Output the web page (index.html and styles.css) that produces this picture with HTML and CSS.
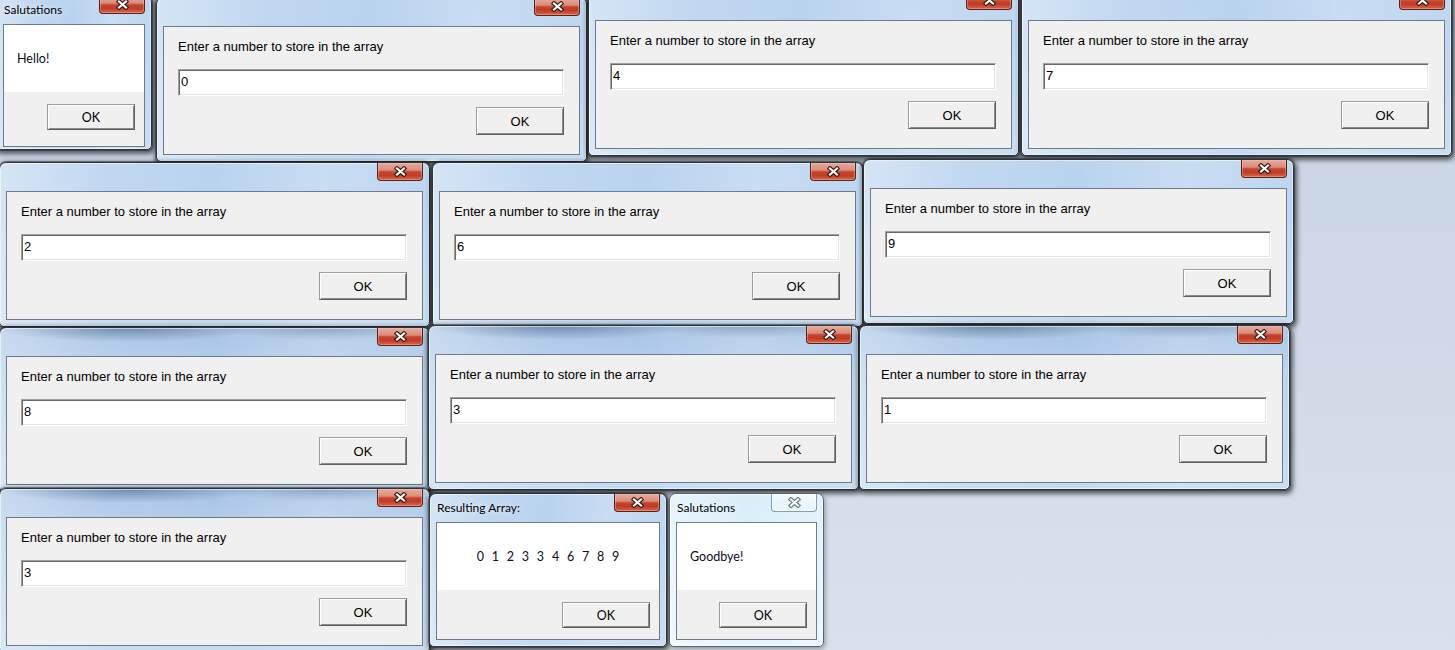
FILE: index.html
```html
<!DOCTYPE html>
<html lang="en">
<head>
<meta charset="utf-8">
<title>Array dialogs</title>
<link rel="stylesheet" href="styles.css">
</head>
<body>
<main class="desktop">

  <section class="win msgwin w-hello">
    <header class="titlebar"><span class="title">Salutations</span>
      <span class="close"><svg class="x" width="13" height="11" viewBox="0 0 13 11"><path class="x-out" d="M3 2.5 L10 8.5 M10 2.5 L3 8.5"/><path class="x-in" d="M3 2.5 L10 8.5 M10 2.5 L3 8.5"/></svg></span>
    </header>
    <div class="client msg">
      <div class="msg-body"><p class="msg-text">Hello!</p></div>
      <div class="msg-foot"><button class="btn msg-btn">OK</button></div>
    </div>
  </section>

  <section class="win inwin w-r1a">
    <header class="titlebar"><span class="close"><svg class="x" width="13" height="11" viewBox="0 0 13 11"><path class="x-out" d="M3 2.5 L10 8.5 M10 2.5 L3 8.5"/><path class="x-in" d="M3 2.5 L10 8.5 M10 2.5 L3 8.5"/></svg></span></header>
    <div class="client prompt">
      <p class="prompt-text">Enter a number to store in the array</p>
      <input class="field" value="0" readonly>
      <button class="btn prompt-btn">OK</button>
    </div>
  </section>

  <section class="win inwin w-r1b">
    <header class="titlebar"><span class="close"><svg class="x" width="13" height="11" viewBox="0 0 13 11"><path class="x-out" d="M3 2.5 L10 8.5 M10 2.5 L3 8.5"/><path class="x-in" d="M3 2.5 L10 8.5 M10 2.5 L3 8.5"/></svg></span></header>
    <div class="client prompt">
      <p class="prompt-text">Enter a number to store in the array</p>
      <input class="field" value="4" readonly>
      <button class="btn prompt-btn">OK</button>
    </div>
  </section>

  <section class="win inwin w-r1c">
    <header class="titlebar"><span class="close"><svg class="x" width="13" height="11" viewBox="0 0 13 11"><path class="x-out" d="M3 2.5 L10 8.5 M10 2.5 L3 8.5"/><path class="x-in" d="M3 2.5 L10 8.5 M10 2.5 L3 8.5"/></svg></span></header>
    <div class="client prompt">
      <p class="prompt-text">Enter a number to store in the array</p>
      <input class="field" value="7" readonly>
      <button class="btn prompt-btn">OK</button>
    </div>
  </section>

  <section class="win inwin w-r2a">
    <header class="titlebar"><span class="close"><svg class="x" width="13" height="11" viewBox="0 0 13 11"><path class="x-out" d="M3 2.5 L10 8.5 M10 2.5 L3 8.5"/><path class="x-in" d="M3 2.5 L10 8.5 M10 2.5 L3 8.5"/></svg></span></header>
    <div class="client prompt">
      <p class="prompt-text">Enter a number to store in the array</p>
      <input class="field" value="2" readonly>
      <button class="btn prompt-btn">OK</button>
    </div>
  </section>

  <section class="win inwin w-r2b">
    <header class="titlebar"><span class="close"><svg class="x" width="13" height="11" viewBox="0 0 13 11"><path class="x-out" d="M3 2.5 L10 8.5 M10 2.5 L3 8.5"/><path class="x-in" d="M3 2.5 L10 8.5 M10 2.5 L3 8.5"/></svg></span></header>
    <div class="client prompt">
      <p class="prompt-text">Enter a number to store in the array</p>
      <input class="field" value="6" readonly>
      <button class="btn prompt-btn">OK</button>
    </div>
  </section>

  <section class="win inwin w-r2c">
    <header class="titlebar"><span class="close"><svg class="x" width="13" height="11" viewBox="0 0 13 11"><path class="x-out" d="M3 2.5 L10 8.5 M10 2.5 L3 8.5"/><path class="x-in" d="M3 2.5 L10 8.5 M10 2.5 L3 8.5"/></svg></span></header>
    <div class="client prompt">
      <p class="prompt-text">Enter a number to store in the array</p>
      <input class="field" value="9" readonly>
      <button class="btn prompt-btn">OK</button>
    </div>
  </section>

  <section class="win inwin dim w-r3a">
    <header class="titlebar"><span class="close"><svg class="x" width="13" height="11" viewBox="0 0 13 11"><path class="x-out" d="M3 2.5 L10 8.5 M10 2.5 L3 8.5"/><path class="x-in" d="M3 2.5 L10 8.5 M10 2.5 L3 8.5"/></svg></span></header>
    <div class="client prompt">
      <p class="prompt-text">Enter a number to store in the array</p>
      <input class="field" value="8" readonly>
      <button class="btn prompt-btn">OK</button>
    </div>
  </section>

  <section class="win inwin dim w-r3b">
    <header class="titlebar"><span class="close"><svg class="x" width="13" height="11" viewBox="0 0 13 11"><path class="x-out" d="M3 2.5 L10 8.5 M10 2.5 L3 8.5"/><path class="x-in" d="M3 2.5 L10 8.5 M10 2.5 L3 8.5"/></svg></span></header>
    <div class="client prompt">
      <p class="prompt-text">Enter a number to store in the array</p>
      <input class="field" value="3" readonly>
      <button class="btn prompt-btn">OK</button>
    </div>
  </section>

  <section class="win inwin dim w-r3c">
    <header class="titlebar"><span class="close"><svg class="x" width="13" height="11" viewBox="0 0 13 11"><path class="x-out" d="M3 2.5 L10 8.5 M10 2.5 L3 8.5"/><path class="x-in" d="M3 2.5 L10 8.5 M10 2.5 L3 8.5"/></svg></span></header>
    <div class="client prompt">
      <p class="prompt-text">Enter a number to store in the array</p>
      <input class="field" value="1" readonly>
      <button class="btn prompt-btn">OK</button>
    </div>
  </section>

  <section class="win inwin dim w-r4a">
    <header class="titlebar"><span class="close"><svg class="x" width="13" height="11" viewBox="0 0 13 11"><path class="x-out" d="M3 2.5 L10 8.5 M10 2.5 L3 8.5"/><path class="x-in" d="M3 2.5 L10 8.5 M10 2.5 L3 8.5"/></svg></span></header>
    <div class="client prompt">
      <p class="prompt-text">Enter a number to store in the array</p>
      <input class="field" value="3" readonly>
      <button class="btn prompt-btn">OK</button>
    </div>
  </section>

  <section class="win msgwin w-res">
    <header class="titlebar"><span class="title">Resulting Array:</span>
      <span class="close"><svg class="x" width="13" height="11" viewBox="0 0 13 11"><path class="x-out" d="M3 2.5 L10 8.5 M10 2.5 L3 8.5"/><path class="x-in" d="M3 2.5 L10 8.5 M10 2.5 L3 8.5"/></svg></span>
    </header>
    <div class="client msg">
      <div class="msg-body"><p class="msg-text digits">0 1 2 3 3 4 6 7 8 9</p></div>
      <div class="msg-foot"><button class="btn msg-btn">OK</button></div>
    </div>
  </section>

  <section class="win msgwin inactive w-bye">
    <header class="titlebar"><span class="title">Salutations</span>
      <span class="close"><svg class="x" width="13" height="11" viewBox="0 0 13 11"><path class="x-out" d="M3 2.5 L10 8.5 M10 2.5 L3 8.5"/><path class="x-in" d="M3 2.5 L10 8.5 M10 2.5 L3 8.5"/></svg></span>
    </header>
    <div class="client msg">
      <div class="msg-body"><p class="msg-text">Goodbye!</p></div>
      <div class="msg-foot"><button class="btn msg-btn">OK</button></div>
    </div>
  </section>

</main>
</body>
</html>
```

FILE: styles.css
```css
* { box-sizing: border-box; }

html, body {
  margin: 0;
  padding: 0;
}

body {
  width: 1455px;
  height: 650px;
  overflow: hidden;
  font-family: "Liberation Sans", Arial, sans-serif;
  color: #000;
}

.desktop {
  position: relative;
  width: 1455px;
  height: 650px;
  overflow: hidden;
  background: linear-gradient(180deg, #c6d3e4 0%, #cfd9e7 45%, #d8e1ec 100%);
}

/* ---------- window frame ---------- */
.win {
  position: absolute;
  display: flex;
  flex-direction: column;
  padding: 0 6px 6px;
  border: 1px solid #2c343d;
  border-radius: 7px 7px 5px 5px;
  background:
    linear-gradient(90deg, rgba(255,255,255,0.40) 0%, rgba(255,255,255,0.10) 25%, rgba(255,255,255,0) 50%, rgba(255,255,255,0.22) 75%, rgba(255,255,255,0.08) 100%),
    linear-gradient(180deg, #bad3ee 0%, #b8d3f1 30%, #c4dbf2 100%);
  box-shadow:
    inset 0 0 0 1px rgba(255,255,255,0.55),
    0 0 0 1px rgba(30,35,40,0.45),
    1px 2px 5px 2px rgba(0,0,0,0.6);
}

.win.dim {
  background:
    radial-gradient(ellipse 30% 14px at 30% 0, rgba(60,90,130,0.55), rgba(60,90,130,0)),
    radial-gradient(ellipse 25% 12px at 75% 0, rgba(60,90,130,0.35), rgba(60,90,130,0)),
    linear-gradient(90deg, rgba(255,255,255,0.35) 0%, rgba(255,255,255,0.08) 25%, rgba(255,255,255,0) 50%, rgba(255,255,255,0.20) 75%, rgba(255,255,255,0.08) 100%),
    linear-gradient(180deg, #a9c4e4 0%, #b8d2ef 35%, #c4dbf2 100%);
}

.win.inactive {
  border-color: #56636f;
  background:
    linear-gradient(90deg, rgba(255,255,255,0.45) 0%, rgba(255,255,255,0.1) 50%, rgba(255,255,255,0.3) 100%),
    linear-gradient(180deg, #d4ebf8 0%, #d9f0fb 40%, #e1f3fb 100%);
  box-shadow:
    inset 0 0 0 1px rgba(255,255,255,0.7),
    1px 2px 5px 0 rgba(0,0,0,0.35);
}

.titlebar {
  position: relative;
  height: 28px;
  display: flex;
  align-items: center;
  flex: none;
}

.title {
  font-family: Lato, "Noto Sans", sans-serif;
  font-size: 12px;
  color: #000;
  padding-left: 1px;
  margin-top: -1px;
  text-shadow: 0 0 6px rgba(255,255,255,0.9);
}

/* ---------- close button ---------- */
.close {
  position: absolute;
  top: 0;
  right: 0;
  width: 46px;
  height: 18px;
  display: flex;
  align-items: center;
  justify-content: center;
  border: 1px solid #5a2218;
  border-top: none;
  border-radius: 0 0 4px 4px;
  background: linear-gradient(180deg, #e7ab9d 0%, #d98c7b 42%, #c4462f 52%, #c03b25 72%, #d7674d 100%);
  box-shadow: inset 0 0 0 1px rgba(255,210,200,0.35);
}

.x { display: block; }
.x-out { stroke: #3a1711; stroke-width: 4.4; fill: none; stroke-linecap: square; }
.x-in  { stroke: #ffffff; stroke-width: 2.2; fill: none; stroke-linecap: square; }

.inactive .close {
  border-color: #8b99a8;
  background: linear-gradient(180deg, rgba(255,255,255,0.75) 0%, rgba(255,255,255,0.35) 50%, rgba(235,247,252,0.6) 100%);
  box-shadow: inset 0 0 0 1px rgba(255,255,255,0.6);
}
.inactive .x-out { stroke: #6d7886; }
.inactive .x-in  { stroke: #f4f7fa; }

/* ---------- client area ---------- */
.client {
  border: 1px solid #6c7a89;
  background: #f0f0f0;
  flex: none;
}

/* input prompt windows */
.inwin { width: 431px; }

.prompt {
  height: 129px;
  display: flex;
  flex-direction: column;
  padding: 12px 15px 0 14px;
}

.prompt-text {
  margin: 0;
  font-size: 13px;
  line-height: 16px;
  height: 16px;
}

.field {
  display: block;
  margin-top: 14px;
  width: 386px;
  height: 27px;
  padding: 0 0 2px 2px;
  font-family: "Liberation Sans", Arial, sans-serif;
  font-size: 13px;
  color: #000;
  background: #fff;
  border: 1px solid;
  border-color: #a0a0a0 #ffffff #ffffff #a0a0a0;
  box-shadow: inset 1px 1px 0 #696969, inset -1px -1px 0 #e3e3e3;
  outline: none;
}

.btn {
  display: block;
  width: 88px;
  height: 28px;
  padding: 0;
  background: #f0f0f0;
  color: #000;
  border: 1px solid;
  border-color: #9d9d9d #5e5e5e #5e5e5e #9d9d9d;
  box-shadow: inset 1px 1px 0 #ffffff, inset -1px -1px 0 #8a8a8a;
  border-radius: 0;
  cursor: default;
}

.prompt-btn {
  margin-top: 11px;
  align-self: flex-end;
  font-family: "Liberation Sans", Arial, sans-serif;
  font-size: 13px;
}

/* message boxes */
.msg {
  display: flex;
  flex-direction: column;
}

.msg-body {
  height: 67px;
  background: #fff;
  padding: 26px 0 0 13px;
  flex: none;
}

.msg-text {
  margin: 0;
  font-family: Lato, "Noto Sans", sans-serif;
  font-size: 12.5px;
  line-height: 16px;
  color: #0c0c1c;
}

.digits {
  text-align: center;
  word-spacing: 4.6px;
}

.msg-foot {
  flex: 1;
  display: flex;
  justify-content: flex-end;
  align-items: flex-start;
  padding: 12px 9px 0 0;
}

.msg-btn {
  height: 26px;
  font-family: Lato, "Noto Sans", sans-serif;
  font-size: 12.5px;
}

/* ---------- window placement on the desktop ---------- */
.w-hello { left: -4px; top: -5px; width: 156px; padding-bottom: 2px; }
.w-hello .client { height: 123px; }

.w-r1a { left: 156px;  top: -3px; }
.w-r1b { left: 588px;  top: -9px; }
.w-r1c { left: 1021px; top: -9px; }

.w-r2a { left: -1px;  top: 162px; }
.w-r2b { left: 432px; top: 162px; }
.w-r2c { left: 863px; top: 159px; }

.w-r3a { left: -1px;  top: 327px; }
.w-r3b { left: 428px; top: 325px; }
.w-r3c { left: 859px; top: 325px; }

.w-r4a { left: -1px; top: 488px; }

.w-res { left: 429px; top: 493px; width: 238px; }
.w-res .client { height: 118px; }
.w-res .msg-body { padding-left: 0; }

.w-bye { left: 669px; top: 493px; width: 155px; }
.w-bye .client { height: 118px; }
```
